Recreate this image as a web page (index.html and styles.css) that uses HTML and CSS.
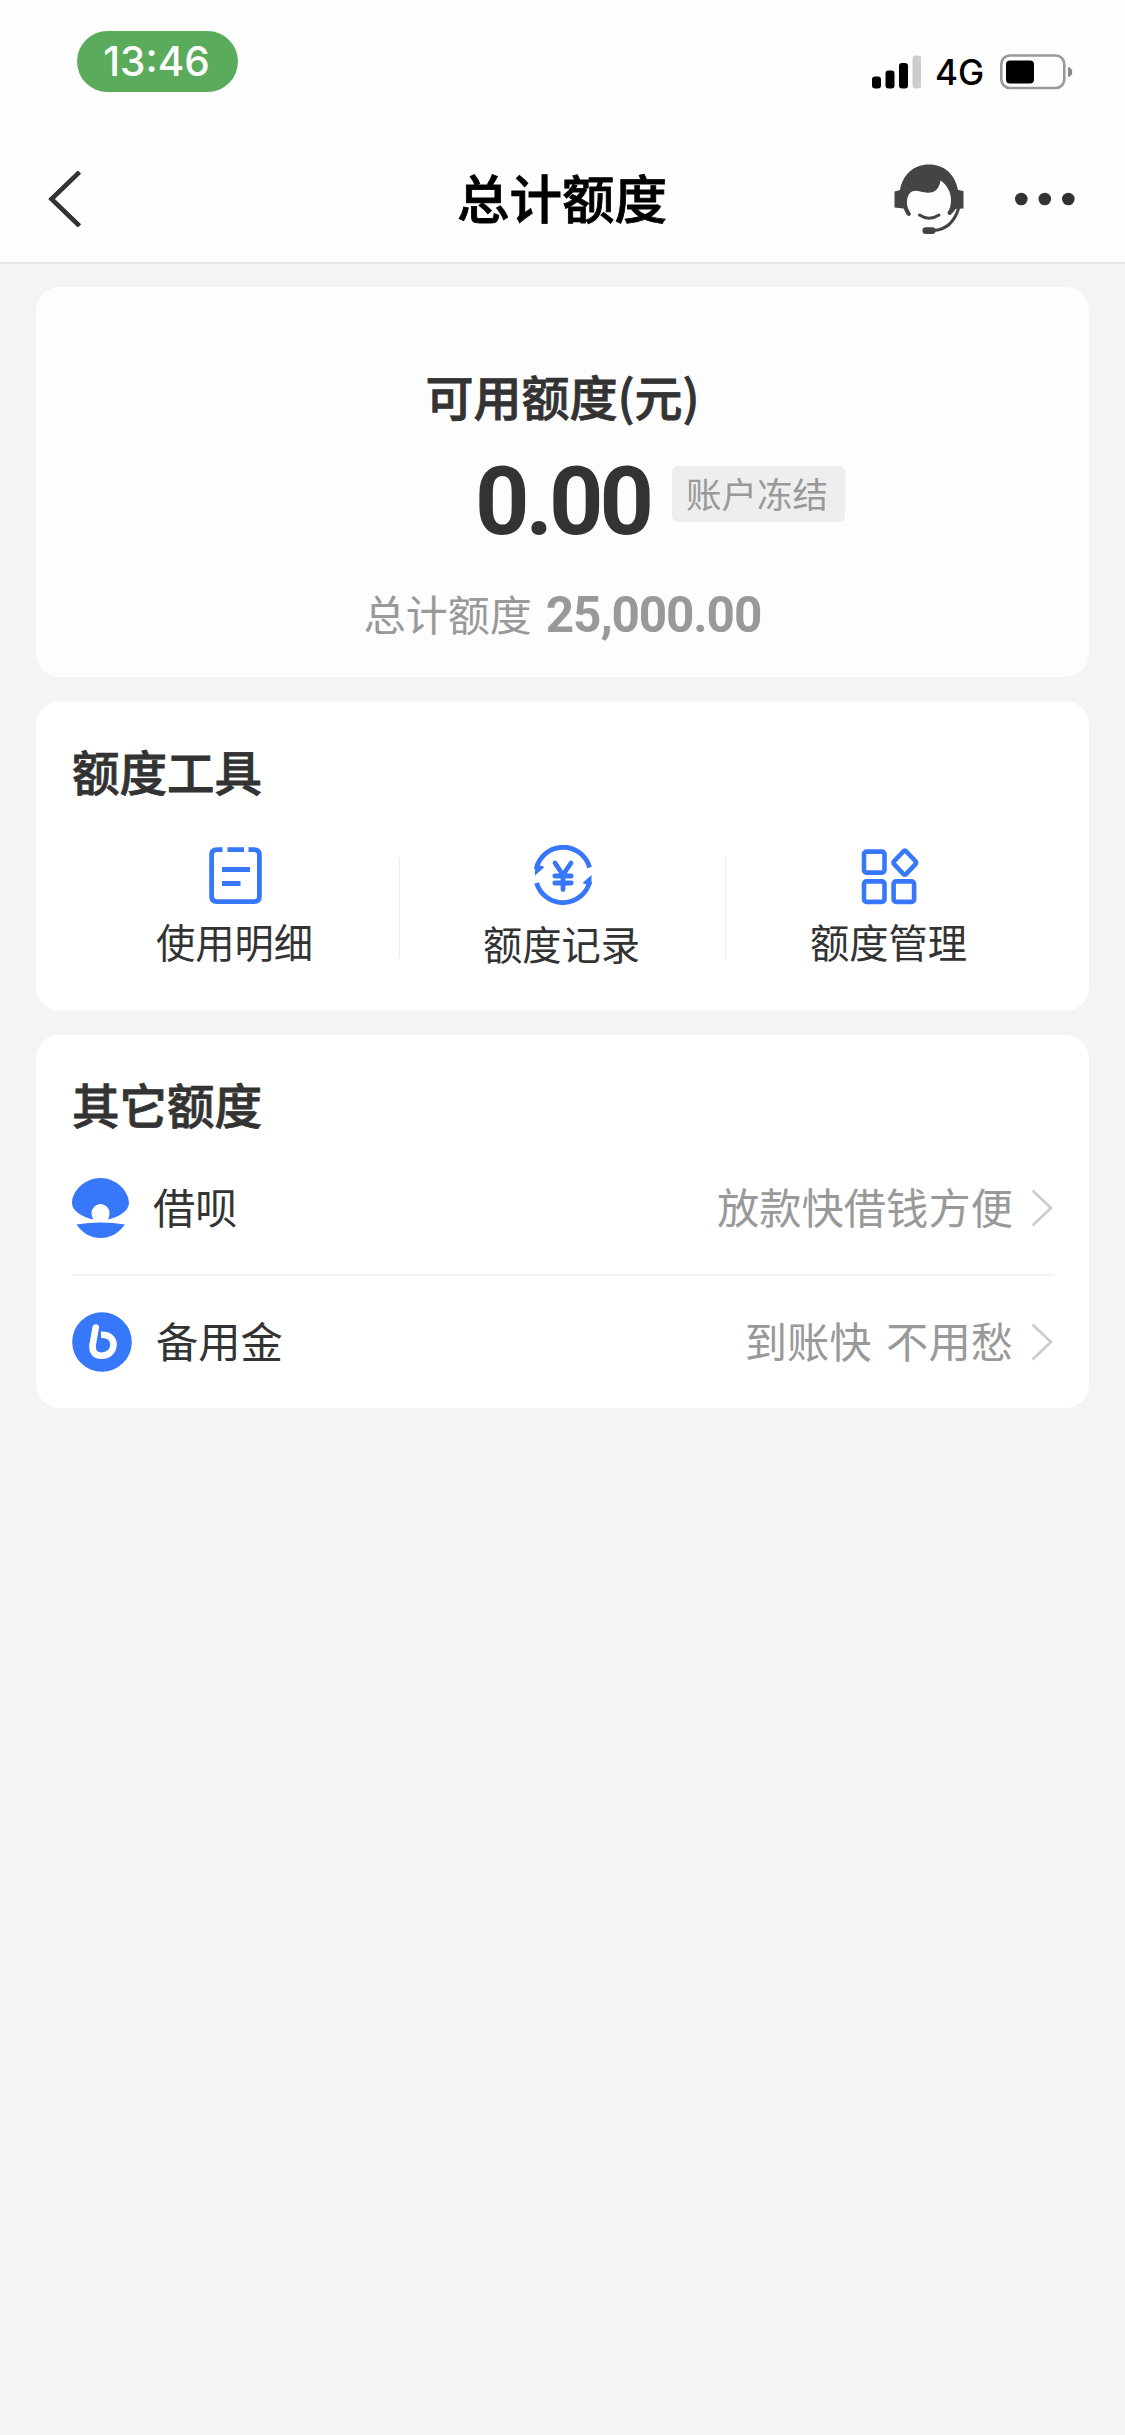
FILE: index.html
```html
<!DOCTYPE html>
<html lang="zh-CN">
<head>
<meta charset="utf-8">
<title>总计额度</title>
<link rel="stylesheet" href="styles.css">
</head>
<body>
<header class="top">
  <div class="status">
    <span class="clock">13:46</span>
    <div class="signals">
      <svg class="bars" width="49" height="34" viewBox="0 0 49 34">
        <rect x="0" y="21.5" width="9" height="12" rx="3"/>
        <rect x="13.5" y="15.5" width="9" height="18" rx="3"/>
        <rect x="27" y="8" width="9" height="25.500" rx="3"/>
        <rect x="40.500" y="0.500" width="8.500" height="33" rx="3" fill="#ccc"/>
      </svg>
      <span class="net">4G</span>
      <svg class="battery" width="73" height="36" viewBox="0 0 73 36">
        <rect x="1.300" y="1.500" width="63" height="32.500" rx="8.500" fill="none" stroke="#999" stroke-width="2.600"/>
        <rect x="6" y="6.500" width="28" height="23" rx="4"/>
        <path d="M68 13Q72.300 14 72.300 18Q72.300 22 68 23Z" fill="#888"/>
      </svg>
    </div>
  </div>
  <nav class="nav">
    <svg class="back" width="34" height="56" viewBox="0 0 34 56"><path d="M31.500 1L3.500 28L31.500 55" fill="none" stroke="#333" stroke-width="4.600"/></svg>
    <h1 class="title">总计额度</h1>
    <div class="actions">
      <svg width="70" height="71" viewBox="0 0 70 71">
        <path fill="#444" d="M6 26C9 10 20 0.500 35 0.500S61 10 64 26L69.500 27V44.500L61.500 45C60 47.500 58.500 49 56.500 51Q53.500 51.500 53.500 48.500C56 45 57 41 57 36C57 28 53 21 46.500 16.500C45 25 41 29 33.500 28.700C27 28.500 23 25.500 18 27.500C13.500 30 12.700 36 13 40C13.500 45 15.500 46.500 17 50C16 53 13 52.500 11.500 48.500L9.500 44.500L0.500 43.500V27.500Z"/>
        <path d="M65 43C61 57 53 66 39 66.500" fill="none" stroke="#444" stroke-width="3"/>
        <rect x="28.500" y="63.200" width="13" height="6.800" rx="3.200" fill="#444"/>
        <path d="M25.500 51Q35 57.500 45 51" fill="none" stroke="#444" stroke-width="3" stroke-linecap="round"/>
      </svg>
      <svg width="62" height="14" viewBox="0 0 62 14" fill="#333"><circle cx="7.300" cy="7" r="6.300"/><circle cx="30.800" cy="7" r="6.300"/><circle cx="54.300" cy="7" r="6.300"/></svg>
    </div>
  </nav>
</header>
<main class="cards">
  <section class="card quota">
    <h2 class="quota-label">可用额度(元)</h2>
    <div class="quota-row"><strong class="amount">0.00</strong><span class="tag">账户冻结</span></div>
    <div class="total">总计额度<b class="total-num">25,000.00</b></div>
  </section>
  <section class="card tools">
    <h2 class="heading">额度工具</h2>
    <div class="tool-grid">
      <div class="tool">
        <svg width="60" height="60" viewBox="0 0 60 60" fill="none" stroke="#3777fa" stroke-width="4.800">
          <path d="M16.500 4.600H11Q5.600 4.600 5.600 10V51.500Q5.600 56.600 11 56.600H48Q53.400 56.600 53.400 51.500V10Q53.400 4.600 48 4.600H42.500M21.500 4.600H38M16 24.500H44M16 38.500H34.500"/>
        </svg>
        <span>使用明细</span>
      </div>
      <div class="tool tool-mid">
        <svg width="60" height="60" viewBox="0 0 60 60" fill="none" stroke="#3777fa" stroke-width="4.800">
          <path d="M3.200 24A27.500 27.500 0 0 1 56.600 22.500M3.600 38A27.500 27.500 0 0 0 56.700 36.500"/>
          <path d="M2 20V30.500L11.500 22L6 20ZM58.500 40V30L49.500 38L54.500 40Z" fill="#3777fa" stroke="none"/>
          <path d="M22 18L30 30L38 18M30 30V44.500M21.800 31H38.200M21.800 38H38.200" stroke-linecap="round"/>
        </svg>
        <span class="mid-name">额度记录</span>
      </div>
      <div class="tool">
        <svg width="60" height="60" viewBox="0 0 60 60" fill="none" stroke="#3777fa" stroke-width="4.600">
          <rect x="4" y="6.600" width="20.500" height="21" rx="2.500"/>
          <rect x="4" y="36.400" width="20.500" height="20.500" rx="2.500"/>
          <rect x="33.600" y="36.400" width="20.500" height="20.500" rx="2.500"/>
          <path d="M43.300 6.500Q44.800 5 46.300 6.500L55.300 16Q56.800 17.700 55.300 19.400L46.300 28.900Q44.800 30.400 43.300 28.900L34.300 19.400Q32.800 17.700 34.300 16Z"/>
        </svg>
        <span>额度管理</span>
      </div>
    </div>
  </section>
  <section class="card others">
    <h2 class="heading">其它额度</h2>
    <div class="row">
      <svg class="logo-shell" width="57" height="60" viewBox="0 0 57 60" fill="#3777fa">
        <path d="M28.500 0C44 0 57 13 57 25C57 33 46 39.500 36 41.500C37 39 37.500 37 37.500 35A9 9 0 0 0 19.500 35C19.500 37 20 39 21.500 41.500C10 39 0 33 0 25C0 13 13 0 28.500 0Z"/>
        <path d="M4.500 46.500Q28.500 42.500 53 46.500Q43 60 28.500 60Q14 60 4.500 46.500Z"/>
      </svg>
      <span class="name">借呗</span>
      <span class="hint">放款快借钱方便</span>
      <svg class="chev" width="22" height="38" viewBox="0 0 22 38"><path d="M1.500 1.500L20 19L1.500 36.500" fill="none" stroke="#ccc" stroke-width="2.600"/></svg>
    </div>
    <div class="row row-last">
      <svg class="logo-b" width="60" height="60" viewBox="0 0 60 60">
        <circle cx="30" cy="30" r="29.800" fill="#3777fa"/>
        <g fill="none" stroke="#fff" stroke-width="6.600">
          <path d="M23.700 15.500L20.800 32" stroke-linecap="round"/>
          <path d="M20.800 32C19.500 39.500 23 43.700 29.500 43.700C37 43.700 41.500 38.500 41.500 32.500C41.500 26.500 37 22.500 29 22.800"/>
        </g>
      </svg>
      <span class="name">备用金</span>
      <span class="hint hint-spaced">到账快 不用愁</span>
      <svg class="chev" width="22" height="38" viewBox="0 0 22 38"><path d="M1.500 1.500L20 19L1.500 36.500" fill="none" stroke="#ccc" stroke-width="2.600"/></svg>
    </div>
  </section>
</main>
</body>
</html>
```
FILE: styles.css
```css
* { box-sizing: border-box; }
body {
  margin: 0;
  min-height: 2435px;
  background: #f4f4f4;
  color: #333;
  font-family: "Noto Sans CJK SC", sans-serif;
}
h1, h2 { margin: 0; font-weight: 500; -webkit-text-stroke: 0.8px currentColor; }
svg { display: block; flex: none; }

.top { height: 264px; background: #fefefe; border-bottom: 2px solid #e6e6e6; }
.status { height: 136px; padding: 31px 52px 0 77px; display: flex; justify-content: space-between; align-items: flex-start; }
.clock {
  width: 161px; height: 61px; border-radius: 31px; padding-right: 2px;
  background: #5aac5c; color: #fff; text-align: center;
  font: 500 40.5px/62px Inter, sans-serif;
}
.signals { display: flex; align-items: center; padding-top: 23px; }
.net { font: 500 35px/36px Inter, sans-serif; color: #000; width: 48px; margin: 0 17px 0 14px; }
.signals svg { fill: #000; }

.nav { height: 126px; display: grid; grid-template-columns: 1fr auto 1fr; align-items: center; padding: 0 49px 0 48px; }
.title { color: #000; font-size: 52.5px; line-height: 76px; padding-bottom: 6px; }
.actions { display: flex; justify-content: flex-end; align-items: center; gap: 50px; }

.cards { padding: 23px 36px 0; display: flex; flex-direction: column; gap: 24px; }
.card { background: #fff; border-radius: 24px; }
.quota { height: 390px; background: #fdfdfd; padding-top: 73px; text-align: center; }
.quota-label { font-size: 48px; line-height: 70px; }
.quota-row { display: grid; grid-template-columns: 1fr auto 1fr; height: 140px; align-items: start; }
.amount { grid-column: 2; font: 700 95px/143px Roboto, sans-serif; letter-spacing: -4px; }
.tag {
  justify-self: start; margin: 36px 0 0 22px; width: 173px; height: 56px; border-radius: 6px; padding-right: 3px;
  background: #eee; color: #999; font-size: 35.500px; line-height: 54px;
}
.total { display: flex; justify-content: center; gap: 14px; color: #999; font-size: 42px; line-height: 85px; }
.total-num { font: 700 49.500px/91px Roboto, sans-serif; letter-spacing: -1.1px; }

.heading { font-size: 47.500px; line-height: 70px; }
.tools { height: 310px; padding: 35px 36px 0; }
.tool-grid { display: grid; grid-template-columns: repeat(3, 1fr); margin-top: 39px; }
.tool { display: flex; flex-direction: column; align-items: center; font-size: 39.300px; line-height: 56px; }
.tool span { margin: 8px 2px 0 0; }
.tool .mid-name { margin-top: 10px; }
.tool-mid { position: relative; }
.tool-mid::before, .tool-mid::after {
  content: ""; position: absolute; top: 13px; height: 100px; width: 1px; background: #ececec;
}
.tool-mid::before { left: 0; }
.tool-mid::after { right: 0; }

.others { height: 373px; padding: 34px 36px 0; }
.row { display: flex; align-items: center; height: 137px; padding-top: 3px; border-bottom: 2px solid #f3f3f3; font-size: 42.300px; line-height: 60px; }
.row span { padding-bottom: 4px; }
.row-last { height: 130px; padding-top: 2px; border: 0; }
.logo-shell { margin-right: 24px; }
.logo-b { margin-right: 24px; }
.name { flex: 1; }
.hint { color: #999; margin-right: 18px; }
.hint-spaced { word-spacing: 5px; }
```
